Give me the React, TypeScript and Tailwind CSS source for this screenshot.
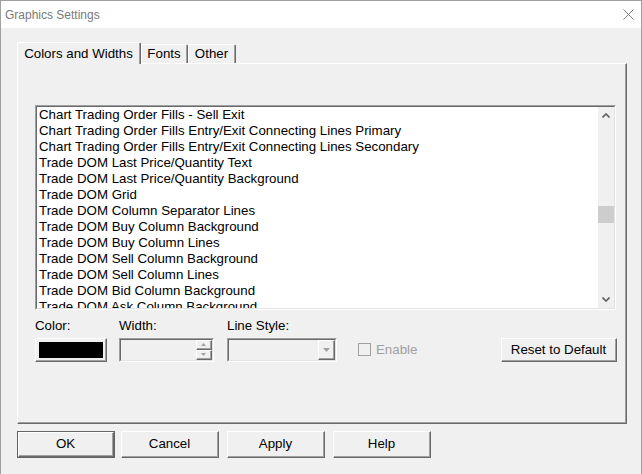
import React from "react";

const items = [
  "Chart Trading Order Fills - Sell Exit",
  "Chart Trading Order Fills Entry/Exit Connecting Lines Primary",
  "Chart Trading Order Fills Entry/Exit Connecting Lines Secondary",
  "Trade DOM Last Price/Quantity Text",
  "Trade DOM Last Price/Quantity Background",
  "Trade DOM Grid",
  "Trade DOM Column Separator Lines",
  "Trade DOM Buy Column Background",
  "Trade DOM Buy Column Lines",
  "Trade DOM Sell Column Background",
  "Trade DOM Sell Column Lines",
  "Trade DOM Bid Column Background",
  "Trade DOM Ask Column Background",
];

// classic 3D raised edge (buttons, tab panel)
function Raised({ className = "", children }: { className?: string; children?: React.ReactNode }) {
  return (
    <div
      className={`border border-t-white border-l-white border-r-[#696969] border-b-[#696969] ${className}`}
    >
      <div className="flex h-full w-full items-center justify-center border-r border-b border-r-[#a0a0a0] border-b-[#a0a0a0]">
        {children}
      </div>
    </div>
  );
}

// classic 3D sunken edge (edit, list, combo)
function Sunken({ className = "", children }: { className?: string; children?: React.ReactNode }) {
  return (
    <div
      className={`border border-t-[#a0a0a0] border-l-[#a0a0a0] border-r-white border-b-white ${className}`}
    >
      <div className="flex h-full w-full border border-t-[#696969] border-l-[#696969] border-r-[#e3e3e3] border-b-[#e3e3e3]">
        {children}
      </div>
    </div>
  );
}

function DialogButton({ label, primary }: { label: string; primary?: boolean }) {
  const btn = (
    <Raised className="h-full w-full bg-[#f0f0f0]">
      <span className="text-[13.3px] text-black">{label}</span>
    </Raised>
  );
  if (primary) {
    return <div className="h-[27px] w-[98px] border border-[#646464]">{btn}</div>;
  }
  return <div className="h-[27px] w-[98px]">{btn}</div>;
}

function Chevron({ up }: { up?: boolean }) {
  return (
    <svg width="8" height="5" viewBox="0 0 8 5" aria-hidden="true">
      <path
        d={up ? "M0.5 4.5 4 1 7.5 4.5" : "M0.5 0.5 4 4 7.5 0.5"}
        fill="none"
        stroke="#606060"
        strokeWidth="1.6"
      />
    </svg>
  );
}

function Tab({ label, active, className = "" }: { label: string; active?: boolean; className?: string }) {
  return (
    <div
      className={`relative flex items-center justify-center rounded-t-[2px] border-t border-l border-r border-t-white border-l-white border-r-[#696969] bg-[#f0f0f0] text-[13.3px] text-black ${
        active ? "z-10 h-[22px]" : "mb-px h-[19px]"
      } ${className}`}
    >
      <div className="flex h-full w-full items-center justify-center border-r border-r-[#a0a0a0]">
        {label}
      </div>
    </div>
  );
}

export default function App() {
  return (
    <div className="flex h-[474px] w-[642px] flex-col overflow-hidden border border-b-0 border-[#a0a0a0] bg-[#f0f0f0] [font-family:'Liberation_Sans',Arial,sans-serif]">
      {/* title bar */}
      <div className="flex h-[27px] shrink-0 items-center justify-between bg-white pr-[7px] pl-[4px]">
        <span className="text-[12px] text-[#7a7a7a]">Graphics Settings</span>
        <svg width="11" height="11" viewBox="0 0 11 11" aria-hidden="true">
          <path d="M0.5 0.5 10.5 10.5M10.5 0.5 0.5 10.5" stroke="#808080" strokeWidth="1" />
        </svg>
      </div>

      <div className="flex flex-col pt-[14px] pl-[16px]">
        {/* tabs */}
        <div className="flex h-[22px] items-end">
          <Tab label="Colors and Widths" active className="w-[124px]" />
          <Tab label="Fonts" className="w-[47px]" />
          <Tab label="Other" className="w-[48px]" />
        </div>

        {/* tab panel */}
        <div className="-mt-px h-[361px] w-[610px] border border-t-white border-l-white border-r-[#696969] border-b-[#696969]">
          <div className="flex h-full w-full flex-col border-r border-b border-r-[#a0a0a0] border-b-[#a0a0a0] pt-[41px] pl-[17px]">
            {/* list box */}
            <Sunken className="h-[205px] w-[581px]">
              <div className="flex-1 overflow-hidden bg-white pl-[2px]">
                {items.map((item) => (
                  <div key={item} className="h-[16px] text-[13.3px] leading-[16px] whitespace-nowrap text-black">
                    {item}
                  </div>
                ))}
              </div>
              <div className="flex w-[16px] flex-col items-center bg-[#f0f0f0]">
                <div className="flex h-[17px] items-center justify-center">
                  <Chevron up />
                </div>
                <div className="relative flex-1">
                  <div className="mt-[82px] h-[17px] w-[16px] bg-[#cdcdcd]" />
                </div>
                <div className="flex h-[17px] items-center justify-center">
                  <Chevron />
                </div>
              </div>
            </Sunken>

            {/* controls */}
            <div className="mt-[8px] flex w-[582px] items-start text-[13.3px]">
              <div className="flex w-[72px] flex-col">
                <span className="h-[16px] leading-[16px] text-black">Color:</span>
                <Raised className="mt-[4px] h-[24px] w-[72px] bg-[#f0f0f0]">
                  <div className="h-[16px] w-[64px] bg-black" />
                </Raised>
              </div>

              <div className="ml-[12px] flex w-[95px] flex-col">
                <span className="h-[16px] leading-[16px] text-black">Width:</span>
                <Sunken className="mt-[4px] h-[24px] w-[95px] bg-[#f0f0f0]">
                  <div className="flex-1" />
                  <div className="flex w-[16px] flex-col">
                    <Raised className="h-[10px] w-[16px] bg-[#f0f0f0]">
                      <svg width="5" height="3" viewBox="0 0 5 3" aria-hidden="true">
                        <path d="M0 3 2.5 0 5 3Z" fill="#a0a0a0" />
                      </svg>
                    </Raised>
                    <Raised className="h-[10px] w-[16px] bg-[#f0f0f0]">
                      <svg width="5" height="3" viewBox="0 0 5 3" aria-hidden="true">
                        <path d="M0 0 2.5 3 5 0Z" fill="#a0a0a0" />
                      </svg>
                    </Raised>
                  </div>
                </Sunken>
              </div>

              <div className="ml-[13px] flex w-[110px] flex-col">
                <span className="h-[16px] leading-[16px] text-black">Line Style:</span>
                <Sunken className="mt-[4px] h-[24px] w-[110px] bg-[#f0f0f0]">
                  <div className="flex-1" />
                  <Raised className="h-full w-[17px] bg-[#f0f0f0]">
                    <svg width="7" height="4" viewBox="0 0 7 4" aria-hidden="true">
                      <path d="M0 0 3.5 4 7 0Z" fill="#a0a0a0" />
                    </svg>
                  </Raised>
                </Sunken>
              </div>

              <div className="mt-[25px] ml-[21px] flex items-center">
                <div className="h-[13px] w-[13px] border border-[#a0a0a0] bg-[#f0f0f0]" />
                <span className="ml-[5px] leading-[13px] text-[#a0a0a0]">Enable</span>
              </div>

              <div className="mt-[20px] ml-auto h-[24px] w-[116px]">
                <Raised className="h-full w-full bg-[#f0f0f0]">
                  <span className="text-black">Reset to Default</span>
                </Raised>
              </div>
            </div>
          </div>
        </div>

        {/* dialog buttons */}
        <div className="mt-[7px] flex">
          <DialogButton label="OK" primary />
          <div className="ml-[6px]">
            <DialogButton label="Cancel" />
          </div>
          <div className="ml-[8px]">
            <DialogButton label="Apply" />
          </div>
          <div className="ml-[8px]">
            <DialogButton label="Help" />
          </div>
        </div>
      </div>
    </div>
  );
}
